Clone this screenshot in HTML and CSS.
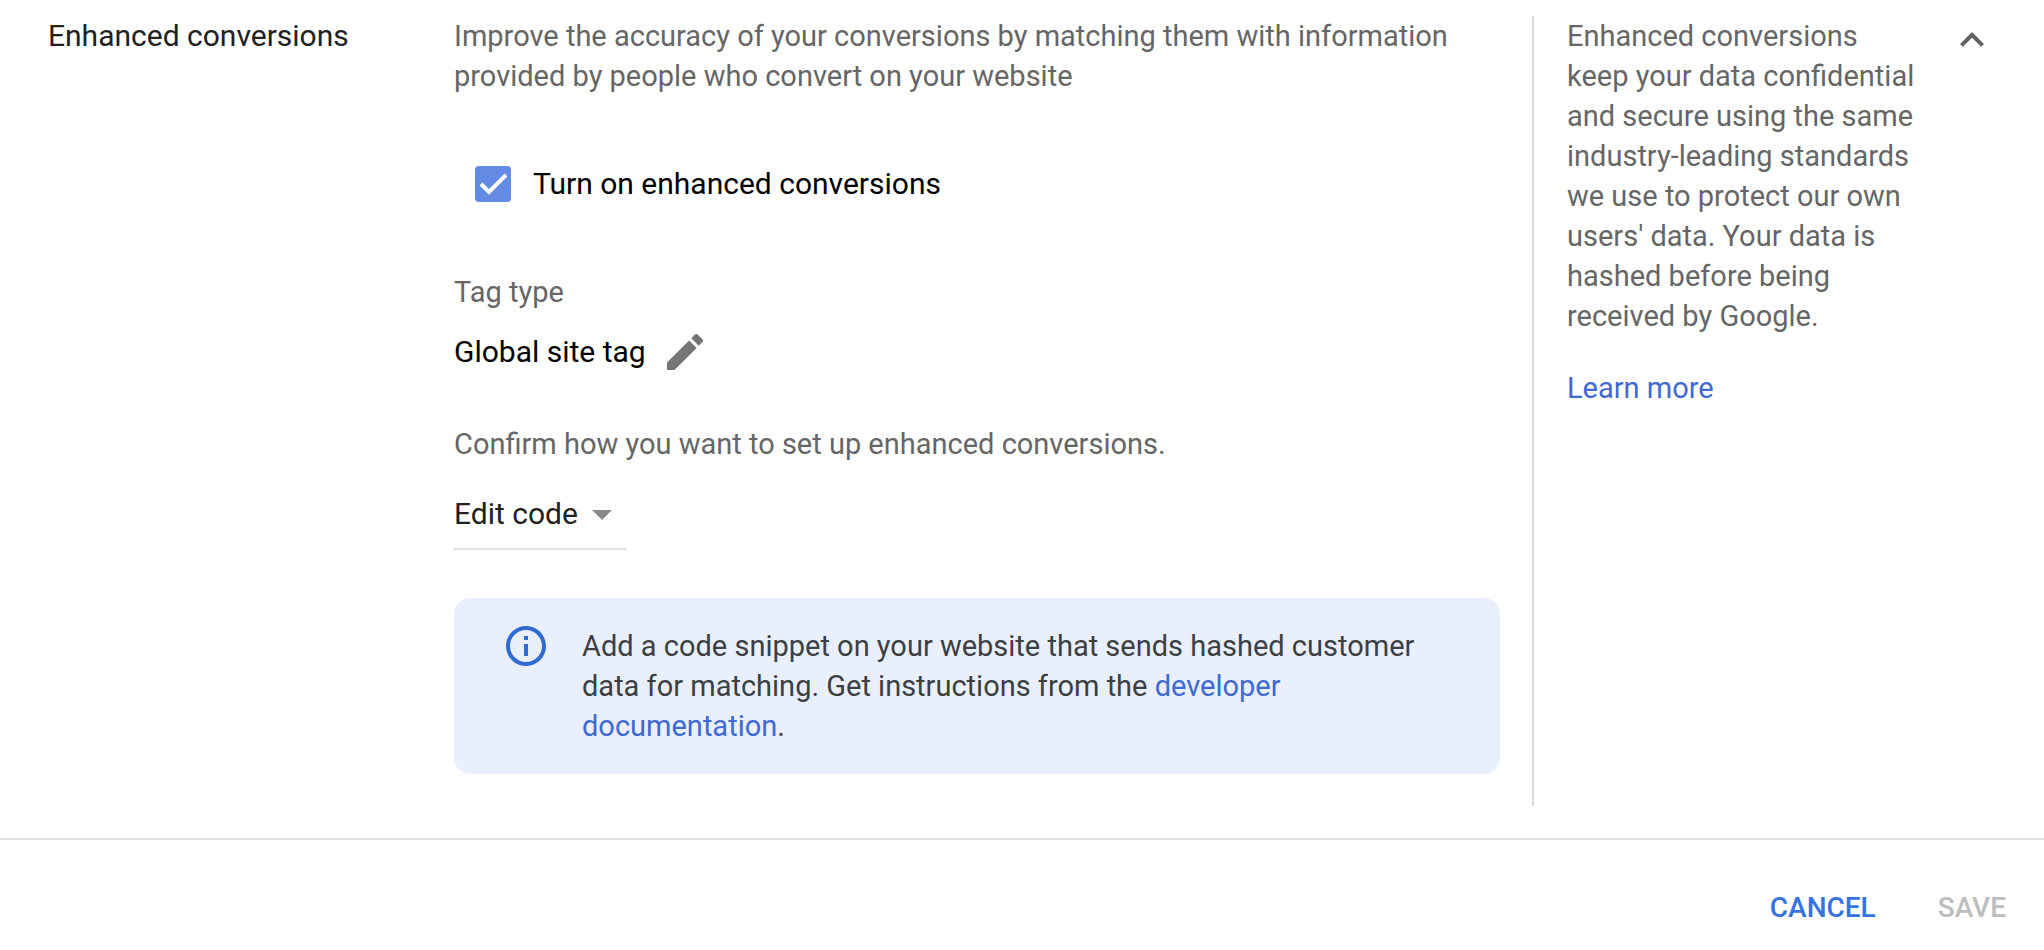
FILE: index.html
```html
<!DOCTYPE html>
<html lang="en">
<head>
<meta charset="utf-8">
<meta name="viewport" content="width=device-width, initial-scale=1">
<title>Enhanced conversions</title>
<link rel="stylesheet" href="styles.css">
</head>
<body>
<section class="panel">
  <h2 class="panel-title">Enhanced conversions</h2>
  <div class="settings">
    <p class="description">Improve the accuracy of your conversions by matching them with information provided by people who convert on your website</p>
    <div class="toggle">
      <span class="checkbox">
        <input class="checkbox-input" type="checkbox" id="enable" checked>
        <svg class="checkbox-mark" viewBox="0 0 36 36" aria-hidden="true"><path d="M6 18l8 8L31 9" fill="none" stroke="#fff" stroke-width="4"/></svg>
      </span>
      <label class="toggle-label" for="enable">Turn on enhanced conversions</label>
    </div>
    <p class="caption">Tag type</p>
    <div class="tag-row">
      <span>Global site tag</span>
      <button class="icon-button" type="button" aria-label="Edit tag type">
        <svg class="icon" viewBox="0 0 24 24" aria-hidden="true"><path fill="#757575" d="M3 17.25V21h3.75L17.81 9.94l-3.75-3.75L3 17.25zM20.71 7.04a1 1 0 0 0 0-1.41l-2.34-2.34a1 1 0 0 0-1.41 0l-1.83 1.83 3.75 3.75 1.83-1.83z"/></svg>
      </button>
    </div>
    <label class="caption" for="method">Confirm how you want to set up enhanced conversions.</label>
    <div class="dropdown">
      <select class="dropdown-select" id="method">
        <option>Edit code</option>
      </select>
      <svg class="dropdown-arrow" viewBox="0 0 24 24" aria-hidden="true"><path fill="#8a8a8a" d="M7 10l5 5 5-5z"/></svg>
    </div>
    <div class="notice">
      <svg class="notice-icon" viewBox="0 0 24 24" aria-hidden="true"><path fill="#2f6bd3" d="M11 7h2v2h-2zm0 4h2v6h-2zm1-9C6.48 2 2 6.48 2 12s4.48 10 10 10 10-4.48 10-10S17.52 2 12 2zm0 18c-4.41 0-8-3.59-8-8s3.59-8 8-8 8 3.59 8 8-3.59 8-8 8z"/></svg>
      <p class="notice-text">Add a code snippet on your website that sends hashed customer data for matching. Get instructions from the <a class="link" href="#docs">developer documentation</a>.</p>
    </div>
  </div>
  <aside class="help">
    <div class="help-text">
      <p>Enhanced conversions keep your data confidential and secure using the same industry-leading standards we use to protect our own users' data. Your data is hashed before being received by Google.</p>
      <a class="link" href="#more">Learn more</a>
    </div>
    <button class="icon-button" type="button" aria-label="Collapse">
      <svg class="icon" viewBox="0 0 24 24" aria-hidden="true"><path fill="#616161" d="M12 8l-6 6 1.41 1.41L12 10.83l4.59 4.58L18 14z"/></svg>
    </button>
  </aside>
</section>
<footer class="actions">
  <button class="action" type="button">CANCEL</button>
  <button class="action" type="button" disabled>SAVE</button>
</footer>
</body>
</html>
```
FILE: styles.css
```css
* {
  box-sizing: border-box;
}

body {
  margin: 0;
  background: #fff;
  color: #666;
  font: 400 29px/40px Roboto, "Liberation Sans", sans-serif;
}

p {
  margin: 0;
}

.panel {
  display: grid;
  grid-template-columns: 406px minmax(0, 1fr) 512px;
  padding: 16px 0 32px 48px;
}

.panel-title {
  margin: 0;
  color: #212121;
  font-size: 30px;
  font-weight: 400;
}

.settings {
  display: flex;
  flex-direction: column;
  padding: 0 32px 32px 0;
}

.toggle {
  display: flex;
  align-items: center;
  gap: 22px;
  margin: 68px 0;
  padding-left: 21px;
}

.toggle-label,
.tag-row {
  color: #000;
  font-size: 30px;
}

.checkbox {
  display: grid;
}

.checkbox-input,
.checkbox-mark {
  grid-area: 1 / 1;
  width: 36px;
  height: 36px;
  margin: 0;
}

.checkbox-input {
  appearance: none;
  border-radius: 4px;
  background: #638be4;
}

.checkbox-mark {
  pointer-events: none;
}

.tag-row {
  display: flex;
  align-items: center;
  gap: 15px;
  margin: 16px 0 48px;
}

.icon-button {
  flex: none;
  width: 48px;
  height: 48px;
  padding: 0;
  border: 0;
  background: none;
}

.icon {
  display: block;
}

.dropdown {
  display: grid;
  align-self: flex-start;
  width: 172px;
  margin: 26px 0 48px;
  border-bottom: 2px solid #e0e0e0;
}

.dropdown-select,
.dropdown-arrow {
  grid-area: 1 / 1;
}

.dropdown-select {
  appearance: none;
  width: 100%;
  height: 58px;
  padding: 0 0 10px;
  border: 0;
  background: none;
  color: #212121;
  font: inherit;
  font-size: 30px;
}

.dropdown-arrow {
  justify-self: end;
  width: 48px;
  height: 48px;
  pointer-events: none;
}

.notice {
  display: flex;
  gap: 32px;
  padding: 24px 64px 24px 48px;
  border-radius: 16px;
  background: #e9effd;
}

.notice-icon {
  flex: none;
  width: 48px;
  height: 48px;
}

.notice-text {
  padding: 4px 0;
  color: #3c4043;
}

.link {
  color: #3f69d3;
  text-decoration: none;
}

.help {
  display: flex;
  align-items: flex-start;
  justify-content: space-between;
  padding: 0 48px 0 33px;
  border-left: 2px solid #dadce0;
}

.help-text {
  display: flex;
  flex-direction: column;
  gap: 32px;
  width: 352px;
}

.actions {
  display: flex;
  justify-content: flex-end;
  gap: 62px;
  padding: 48px 38px 40px;
  border-top: 2px solid #e0e0e0;
}

.action {
  padding: 0;
  border: 0;
  background: none;
  color: #3374e0;
  font: inherit;
  font-size: 28px;
  font-weight: 500;
}

.action:disabled {
  color: #bdbdbd;
}
```
